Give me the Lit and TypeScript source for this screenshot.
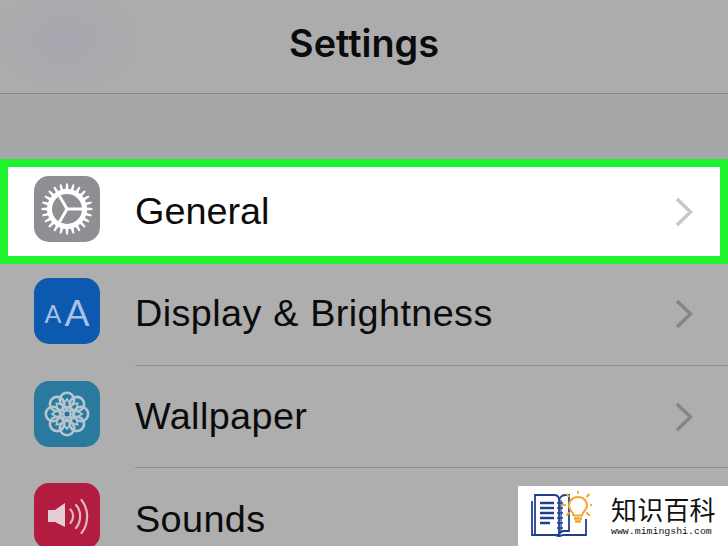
import { LitElement, html, svg, css } from "lit";
import { customElement } from "lit/decorators.js";

function gearPath(cx: number, cy: number, rOut: number, rRoot: number, teeth: number) {
  const pts: string[] = [];
  const step = (Math.PI * 2) / teeth;
  for (let i = 0; i < teeth; i++) {
    const a = i * step - Math.PI / 2;
    const seq: [number, number][] = [
      [rRoot, a - step * 0.27],
      [rOut, a - step * 0.14],
      [rOut, a + step * 0.14],
      [rRoot, a + step * 0.27],
    ];
    for (const [r, t] of seq) pts.push(`${(cx + r * Math.cos(t)).toFixed(2)} ${(cy + r * Math.sin(t)).toFixed(2)}`);
  }
  return "M" + pts.join("L") + "Z";
}

const gearIcon = html`<svg viewBox="0 0 66 66" width="66" height="66">
  <path d=${gearPath(33, 33, 25.5, 20, 24)} fill="#fff"></path>
  <circle cx="33" cy="33" r="15" fill="#8e8e93"></circle>
  <path d="M33 33L25.5 20M33 33H48M33 33L25.5 46" stroke="#fff" stroke-width="3" fill="none"></path>
</svg>`;

const pt = (r: number, a: number) => `${(33 + r * Math.cos(a)).toFixed(2)} ${(33 + r * Math.sin(a)).toFixed(2)}`;
const petals = Array.from({ length: 8 }, (_, i) => {
  const a = (i * Math.PI) / 4;
  return svg`<circle cx=${33 + 14 * Math.cos(a)} cy=${33 + 14 * Math.sin(a)} r="7.2"></circle>`;
});
const kites = Array.from({ length: 8 }, (_, i) => {
  const a = (i * Math.PI) / 4;
  const d = Math.PI / 8;
  return svg`<path d="M${pt(4, a)}L${pt(10, a + d)}L${pt(15, a)}L${pt(10, a - d)}Z"></path>`;
});
const flowerIcon = html`<svg viewBox="0 0 66 66" width="66" height="66" fill="none" stroke="#b5c6ce" stroke-width="2.6">
  ${petals}
  <g stroke-width="1.7">${kites}</g>
  <circle cx="33" cy="33" r="3.4" fill="#2a6f92" stroke-width="1.8"></circle>
</svg>`;

const soundIcon = html`<svg viewBox="0 0 66 66" width="66" height="66" fill="none" stroke="#e0b8c0" stroke-width="2.2" stroke-linecap="round">
  <path d="M14 27H21L31 20V44L21 39H14Z" fill="#e2cdd2" stroke="none"></path>
  <path d="M36.500 26.500C40 30 40 36 36.500 40"></path>
  <path d="M42 22C47.500 28 47.500 38 42 45"></path>
  <path d="M47.500 17C55 26 55 41 47.500 50"></path>
</svg>`;

const chevron = html`<svg class="chev" viewBox="0 0 18 30" width="18" height="30" fill="none" stroke="currentColor" stroke-width="3.6">
  <path d="M2 2L15.500 15L2 28"></path>
</svg>`;

@customElement("app-root")
export class AppRoot extends LitElement {
  static styles = css`
    :host {
      display: block;
      position: relative;
      width: 728px;
      height: 546px;
      overflow: hidden;
      background: #a7a7aa;
      font-family: "Liberation Sans", Arial, sans-serif;
      color: #0b0b0b;
    }
    .header {
      height: 94px;
      box-sizing: border-box;
      border-bottom: 1px solid #87878d;
      background: radial-gradient(ellipse 80px 55px at 65px 40px, #a6a6b0, transparent), #acacac;
      display: flex;
      justify-content: center;
      align-items: center;
      font-family: "Inter", "Liberation Sans", sans-serif;
      font-size: 37.8px;
      font-weight: 600;
      padding-bottom: 7px;
    }
    .gap { height: 65px; }
    .row {
      display: flex;
      padding-left: 34px;
      height: 102px;
      background: #aeaeae;
    }
    .row.selected {
      box-sizing: border-box;
      height: 105px;
      border: 8px solid #1ff22e;
      padding-left: 26px;
      background: #fff;
    }
    .icon {
      width: 66px;
      height: 66px;
      flex: none;
      align-self: center;
      margin-bottom: 6px;
      border-radius: 15px;
      display: flex;
      align-items: center;
      justify-content: center;
      overflow: hidden;
    }
    .gear { background: #8e8e93; margin-bottom: 5px; }
    .display { background: #0c59b0; margin-bottom: 8px; }
    .flower { background: #2a7a9f; }
    .sound { background: #b31c41; }
    .aa {
      font-family: "Lato", "Liberation Sans", sans-serif;
      color: #a9c1e2;
      display: flex;
      align-items: baseline;
      gap: 3px;
      line-height: 1;
    }
    .aa .s { font-size: 25px; transform: translateY(-3px); }
    .aa .b { font-size: 37px; }
    .body {
      flex: 1;
      margin-left: 35px;
      display: flex;
      align-items: center;
      justify-content: space-between;
      padding-right: 35px;
      border-bottom: 1px solid #8f8f90;
      font-size: 37.8px;
      letter-spacing: 0.4px;
      word-spacing: 0.5px;
    }
    .selected .body { border-bottom: none; margin-right: -8px; letter-spacing: 0; }
    .last .body { border-bottom: none; }
    .raised .body { padding-bottom: 2px; }
    .chev { color: #85858a; flex: none; }
    .selected .chev { color: #c7c7cc; }
    .mark {
      position: absolute;
      left: 518px;
      top: 486px;
      width: 210px;
      height: 60px;
      background: #fff;
      display: flex;
    }
    .mark svg { flex: none; margin-left: 12px; margin-top: 5px; }
    .mark-text { margin-left: 19px; display: flex; flex-direction: column; align-items: flex-start; }
    .cn {
      font-family: "Noto Sans CJK SC", sans-serif;
      font-size: 26px;
      line-height: 28px;
      margin-top: 9px;
      color: #111;
      letter-spacing: 0.2px;
    }
    .url {
      font-family: "Liberation Mono", monospace;
      font-size: 9.9px;
      line-height: 12px;
      margin-top: 3px;
      color: #111;
    }
  `;

  render() {
    return html`
      <div class="header">Settings</div>
      <div class="gap"></div>
      <div class="row selected">
        <div class="icon gear">${gearIcon}</div>
        <div class="body"><span>General</span>${chevron}</div>
      </div>
      <div class="row raised">
        <div class="icon display"><div class="aa"><span class="s">A</span><span class="b">A</span></div></div>
        <div class="body"><span>Display &amp; Brightness</span>${chevron}</div>
      </div>
      <div class="row">
        <div class="icon flower">${flowerIcon}</div>
        <div class="body"><span>Wallpaper</span>${chevron}</div>
      </div>
      <div class="row last">
        <div class="icon sound">${soundIcon}</div>
        <div class="body"><span>Sounds</span>${chevron}</div>
      </div>
      <div class="mark">
        <svg viewBox="0 0 62 46" width="62" height="46" fill="none" stroke="#1f3f8f" stroke-width="1.800">
          <path d="M5 4H24C27 4 29 6 29 9V44H5Z" fill="#fff"></path>
          <path d="M2 10V44H24C26 44 28 44.500 29 46C30 44.500 32 44 34 44H56V28"></path>
          <path d="M29 9C30 6 32 4 36 4H39V40H34C32 40 30 41 29 43"></path>
          <path d="M10 12H24M10 17H24M10 22H24M10 27H24M10 32H20" stroke-width="2.400"></path>
          <path d="M31 9V42M27 12H33M27 17H33M27 22H33M27 27H33M27 32H33M27 37H33" stroke-width="1.300"></path>
          <g stroke="#f4a62a" stroke-width="2">
            <path d="M48 6C42 6 39 10.500 39 14.500C39 19 43 20.500 43.500 24.500H52C52.500 20.500 57 19 57 14.500C57 10.500 54 6 48 6Z" fill="#fff"></path>
            <path d="M44 27.500H52M45 30.500H51" stroke-width="2.400"></path>
            <path d="M48 -1V2M37 3.500L39 5.500M59 3.500L57 5.500M32 14H35M61 14H64M37 24L39 22M59 24L57 22" stroke-linecap="round"></path>
          </g>
        </svg>
        <div class="mark-text">
          <div class="cn">知识百科</div>
          <div class="url">www.mimingshi.com</div>
        </div>
      </div>
    `;
  }
}
